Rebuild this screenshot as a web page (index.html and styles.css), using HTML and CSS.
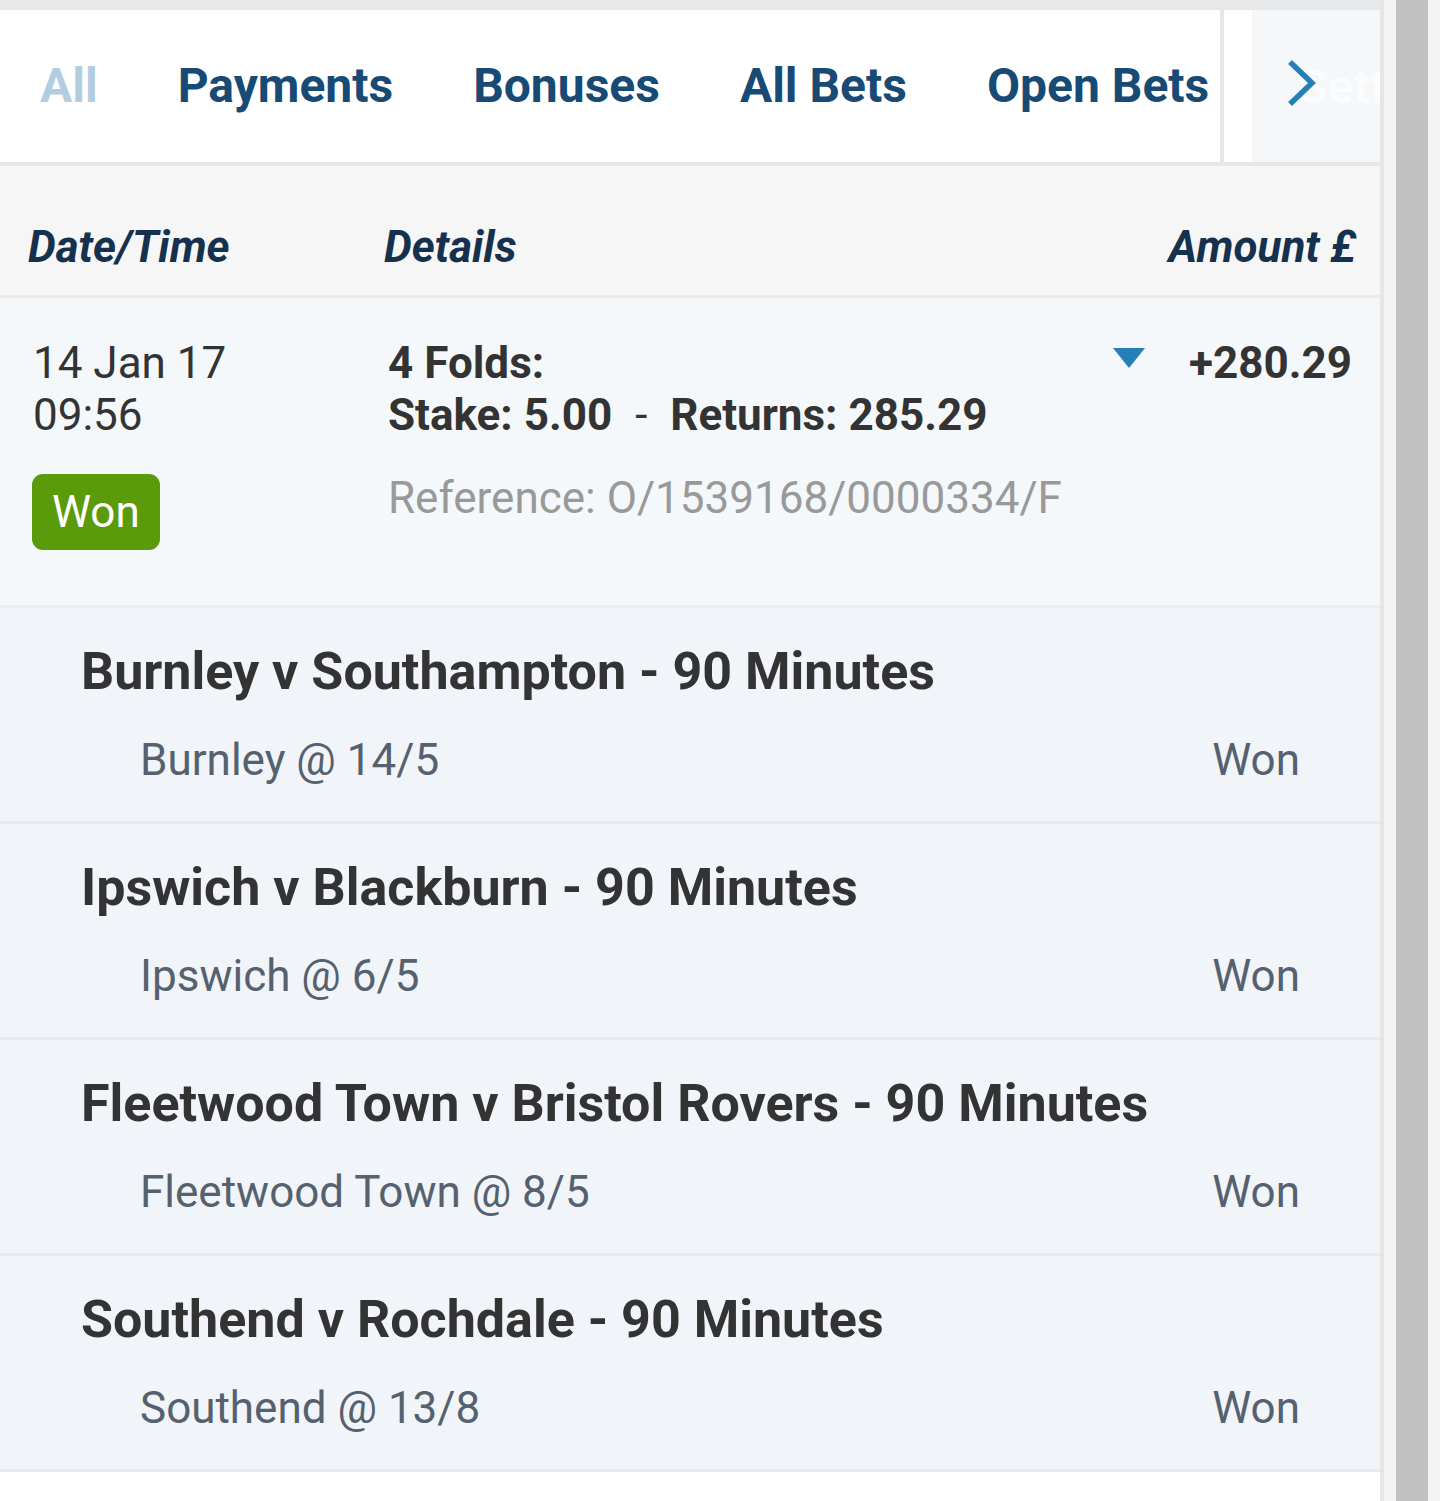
FILE: index.html
```html
<!DOCTYPE html>
<html lang="en">
<head>
<meta charset="utf-8">
<title>Account history</title>
<link rel="stylesheet" href="styles.css">
</head>
<body>
<div class="page">
  <main class="main">
    <div class="topstrip"></div>
    <nav class="tabs">
      <ul class="tab-list">
        <li class="tab tab-active">All</li>
        <li class="tab">Payments</li>
        <li class="tab">Bonuses</li>
        <li class="tab">All Bets</li>
        <li class="tab">Open Bets</li>
      </ul>
      <div class="tab-more">
        <span class="tab-hidden">Sett</span>
        <svg class="chevron" width="30" height="46" viewBox="0 0 30 46"><path d="M3 2 L25 23 L3 44" fill="none" stroke="#2580b8" stroke-width="5.5"/></svg>
      </div>
    </nav>
    <div class="thead">
      <div class="col-date">Date/Time</div>
      <div class="col-details">Details</div>
      <div class="col-amount">Amount £</div>
    </div>
    <section class="bet">
      <div class="col-date bet-date">
        <div>14 Jan 17</div>
        <div>09:56</div>
        <span class="badge">Won</span>
      </div>
      <div class="col-details bet-details">
        <div class="bet-title">4 Folds:</div>
        <div class="bet-title">Stake: 5.00 <span class="dash">-</span> Returns: 285.29</div>
        <div class="bet-ref">Reference: O/1539168/0000334/F</div>
      </div>
      <div class="bet-toggle"><span class="triangle"></span></div>
      <div class="col-amount bet-amount">+280.29</div>
    </section>
    <ul class="legs">
      <li class="leg">
        <div class="leg-title">Burnley v Southampton - 90 Minutes</div>
        <div class="leg-line"><span>Burnley @ 14/5</span><span>Won</span></div>
      </li>
      <li class="leg">
        <div class="leg-title">Ipswich v Blackburn - 90 Minutes</div>
        <div class="leg-line"><span>Ipswich @ 6/5</span><span>Won</span></div>
      </li>
      <li class="leg">
        <div class="leg-title">Fleetwood Town v Bristol Rovers - 90 Minutes</div>
        <div class="leg-line"><span>Fleetwood Town @ 8/5</span><span>Won</span></div>
      </li>
      <li class="leg">
        <div class="leg-title">Southend v Rochdale - 90 Minutes</div>
        <div class="leg-line"><span>Southend @ 13/8</span><span>Won</span></div>
      </li>
    </ul>
  </main>
  <div class="scrolltrack"><div class="scrollthumb"></div></div>
</div>
</body>
</html>
```

FILE: styles.css
```css
* { box-sizing: border-box; }
html, body { margin: 0; padding: 0; }
body {
  font-family: Roboto, "Liberation Sans", Arial, sans-serif;
  background: #ffffff;
  color: #333333;
}
.page {
  display: flex;
  min-height: 1501px;
}
.main {
  width: 1384px;
  border-right: 4px solid #e6e6e6;
  background: #ffffff;
}
.scrolltrack {
  flex: 1;
  background: #f4f4f4;
  padding: 0 12px;
  display: flex;
}
.scrollthumb {
  flex: 1;
  background: #c1c1c1;
}
.topstrip {
  height: 10px;
  background: #e7e8e9;
}
.tabs {
  display: flex;
  height: 156px;
  border-bottom: 4px solid #e6e7e8;
  background: #ffffff;
}
.tab-list {
  list-style: none;
  margin: 0;
  padding: 0;
  width: 1224px;
  border-right: 4px solid #e6e7e8;
  display: flex;
  align-items: center;
  overflow: hidden;
}
.tab {
  font-size: 48px;
  font-weight: 700;
  color: #174a74;
  padding: 0 40px;
  white-space: nowrap;
  line-height: 56px;
}
.tab:first-child { padding-left: 40px; }
.tab-active { color: #b3cde0; }
.tab-more {
  position: relative;
  flex: 1;
  margin-left: 28px;
  background: #f5f7f9;
  display: flex;
  align-items: center;
  overflow: hidden;
}
.tab-hidden {
  font-size: 48px;
  font-weight: 700;
  color: #fbfcfd;
  white-space: nowrap;
  padding-left: 46px;
}
.chevron {
  position: absolute;
  left: 35px;
  top: 50px;
}
.thead {
  display: flex;
  align-items: flex-end;
  height: 132px;
  padding: 0 24px 22px 28px;
  background: #f6f6f6;
  border-bottom: 3px solid #ebebeb;
  font-size: 44px;
  font-weight: 700;
  font-style: italic;
  color: #15314d;
  line-height: 52px;
}
.col-date { width: 356px; flex: none; }
.col-details { flex: 1; }
.col-amount { text-align: right; }
.bet {
  display: flex;
  align-items: flex-start;
  padding: 39px 28px 0 33px;
  height: 310px;
  background: #f4f8fb;
  border-bottom: 3px solid #ebedf0;
}
.bet-date {
  width: 355px;
  font-size: 44px;
  line-height: 52px;
  color: #333333;
}
.badge {
  display: inline-block;
  margin-top: 33px;
  margin-left: -1px;
  background: #5b9a0a;
  color: #ffffff;
  border-radius: 11px;
  font-size: 44px;
  line-height: 76px;
  height: 76px;
  padding: 0 20px;
}
.bet-details {
  font-size: 44px;
  line-height: 52px;
}
.bet-title {
  font-weight: 700;
  color: #333333;
}
.dash {
  display: inline-block;
  padding: 0 12px;
  font-weight: 400;
}
.bet-ref {
  margin-top: 31px;
  color: #999999;
  font-size: 44px;
}
.bet-toggle {
  width: 76px;
  padding-top: 11px;
}
.triangle {
  display: block;
  width: 0;
  height: 0;
  border-left: 16px solid transparent;
  border-right: 16px solid transparent;
  border-top: 20px solid #2580b8;
}
.bet-amount {
  font-size: 44px;
  font-weight: 700;
  line-height: 52px;
  color: #333333;
}
.legs {
  list-style: none;
  margin: 0;
  padding: 0;
}
.leg {
  height: 216px;
  padding: 34px 80px 0 81px;
  background: #f1f4f9;
  border-bottom: 3px solid #e8eaed;
}
.leg-title {
  font-size: 52px;
  font-weight: 700;
  line-height: 60px;
  color: #333333;
}
.leg-line {
  display: flex;
  justify-content: space-between;
  padding-left: 59px;
  margin-top: 32px;
  font-size: 44px;
  line-height: 52px;
  color: #55616e;
}
```
